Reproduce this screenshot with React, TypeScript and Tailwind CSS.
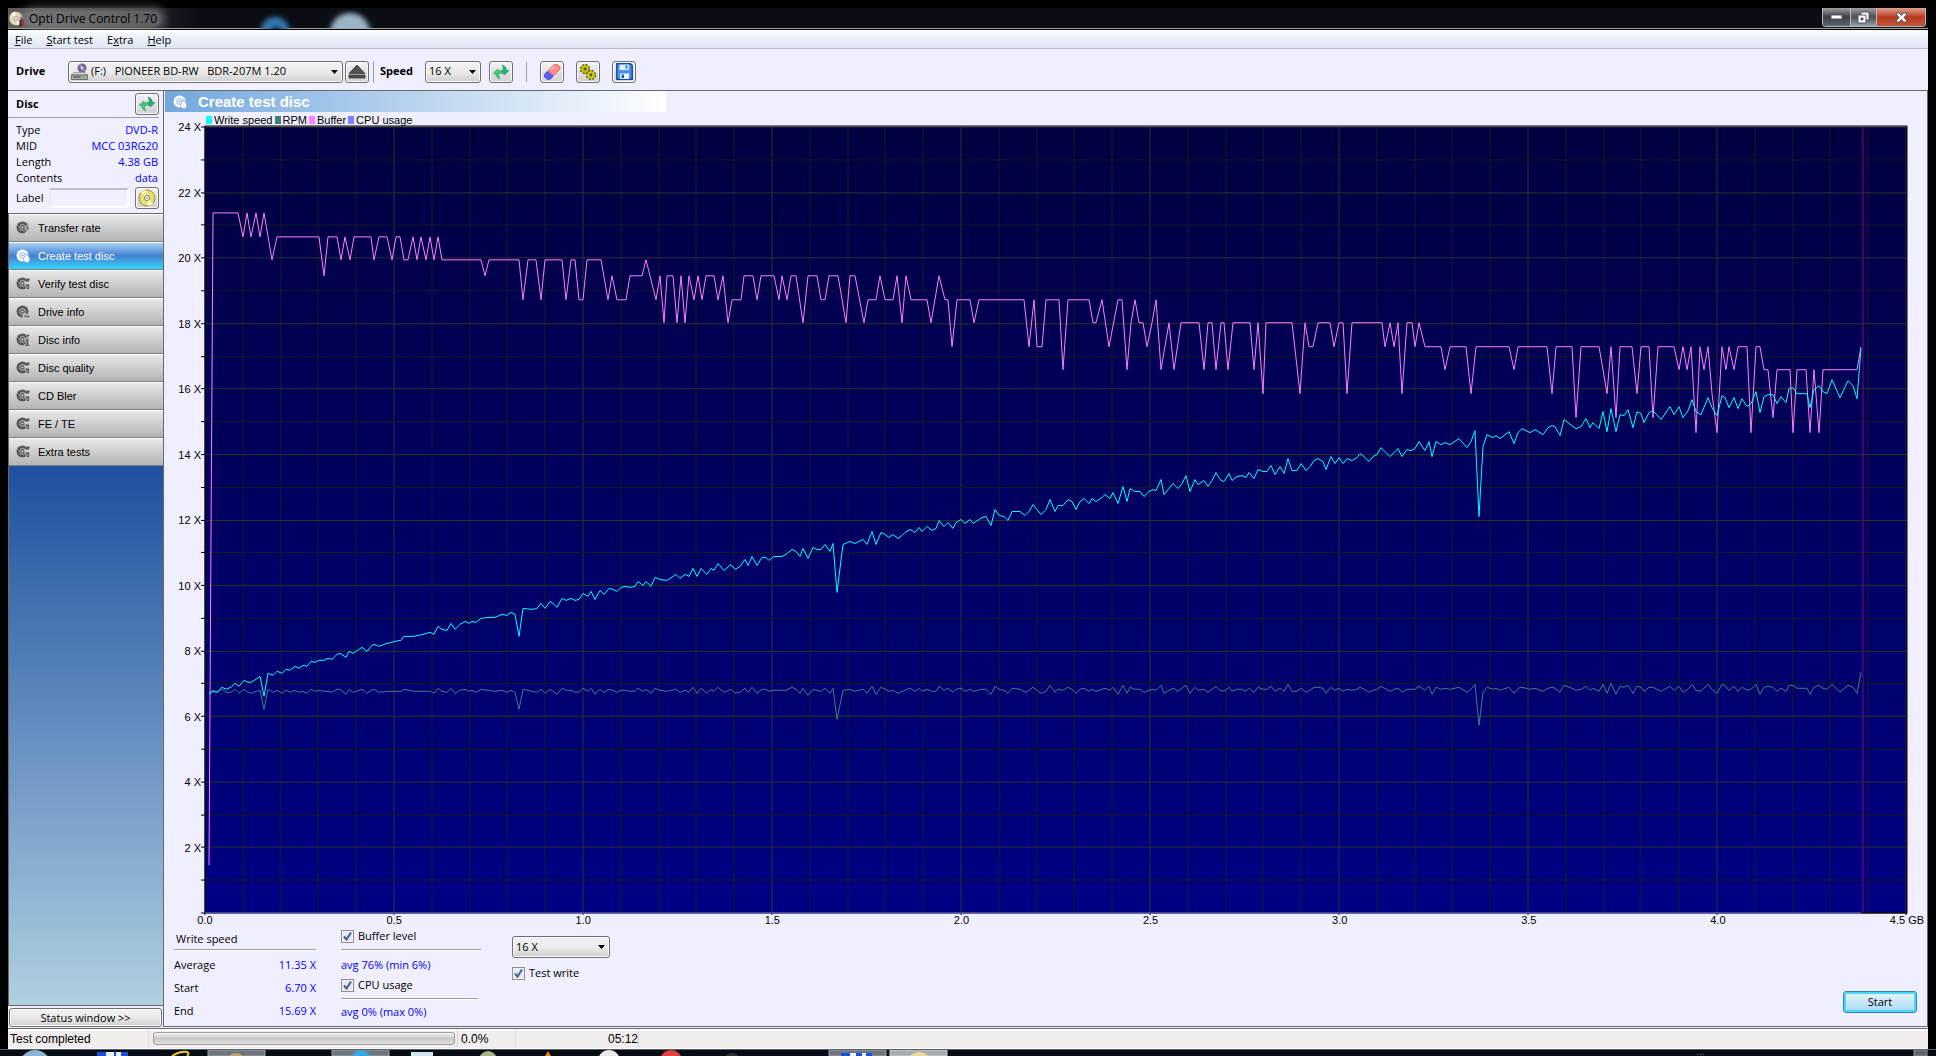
import { useState, type ReactNode } from "react";
import { clsx } from "clsx";

interface Point {
  x: number;
  y: number;
}

// plot area, in chart units
const LEFT = 205;
const TOP = 127;
const WIDTH = 1702;
const HEIGHT = 787;
const BOTTOM = TOP + HEIGHT;
const LAST_X = 1861;

const BUFFER_LEVELS: Record<string, number> = {
  a: 213, b: 237, c: 260, d: 276, e: 300, f: 323, g: 347, h: 370, i: 394, j: 418, k: 433, z: 866,
};

const BUFFER = `209z 213a 238a 243b 247a 251b 256a 260b 264a 272c 277b 319b 324d 328b 337b 341c 345b 350c 354b 371b
374c 379b 387b 392c 396b 400b 404c 408c 413b 417c 421b 426c 430b 434c 438b 442c 481c 485d 489c 519c 523e 528c 536c
541e 545c 562c 566e 571c 575c 579e 583e 587c 601c 608e 612d 617e 626e 630d 642d 646c 650d 656e 660d 664f 667d 673d
677f 681d 685f 689d 694e 698d 702e 706d 714d 718e 723d 728f 732e 741e 744d 753d 757e 761d 774d 779e 782d 787e 791d
796d 803f 808d 817d 821e 825e 829d 838d 846f 850d 855d 864f 868e 876e 880d 885e 893e 897d 902f 906d 911e 927e 931f
939d 945e 948e 952g 957e 970e 974f 979e 1024e 1029g 1034e 1037g 1042g 1046e 1059e 1063h 1068e 1089e 1093f 1096f
1102e 1109g 1118e 1122e 1127h 1131f 1135e 1139f 1143f 1147g 1152f 1156e 1161h 1169f 1174h 1181f 1199f 1204h 1208f
1212f 1216h 1221f 1224f 1228h 1233f 1250f 1254h 1258f 1263i 1266f 1292f 1300i 1305f 1309g 1313g 1318f 1330f 1334g
1339f 1343f 1347i 1352f 1382f 1385g 1390f 1394g 1398f 1402i 1407f 1412f 1415g 1419f 1425g 1441g 1445h 1450g 1466g
1471i 1476g 1509g 1514h 1518g 1547g 1552i 1556g 1572g 1576j 1581g 1599g 1603h 1607i 1611g 1616j 1620g 1632g 1637i
1641g 1649g 1653j 1658g 1674g 1679h 1683g 1687h 1691g 1696k 1700g 1704h 1708g 1712i 1717k 1722g 1726h 1729g 1734h
1738g 1747g 1751k 1756g 1760g 1764h 1768h 1773j 1777h 1790h 1793k 1797h 1806h 1810k 1814h 1819k 1823h 1857h 1861g`;

const SPEED = `209,695 213,692 217,693 222,688 226,690 231,688 235,684 239,687 244,681 248,683 251,683 256,680 260,677
264,697 268,674 273,676 277,672 282,674 286,670 290,671 295,667 299,669 303,666 307,667 311,662 315,663 319,661
324,661 328,659 332,660 337,655 340,654 346,658 349,652 353,654 362,648 367,652 371,647 374,645 379,647 387,644
392,643 395,642 401,641 404,637 414,637 423,635 430,633 434,635 438,627 442,630 447,631 451,624 455,630 460,625
465,622 469,624 472,622 476,623 481,619 488,618 495,618 502,615 507,616 511,613 515,615 519,637 523,609 532,610
537,609 541,604 545,609 550,602 553,604 557,608 562,599 566,601 571,599 575,601 579,600 583,594 588,597 591,592
595,600 600,591 604,595 609,589 613,590 617,592 621,588 626,587 630,588 635,587 638,582 643,586 646,582 651,587
655,578 660,580 667,581 676,575 680,579 685,575 689,577 693,569 697,577 701,569 707,575 711,569 714,571 718,564
724,571 731,565 735,570 740,567 745,560 748,566 752,557 757,566 762,558 766,558 769,561 774,557 782,557 786,555
792,550 796,552 800,557 803,549 808,559 813,548 817,550 821,550 825,545 830,552 833,544 837,593 843,545 850,542
855,544 863,540 867,545 872,532 876,545 881,533 885,535 889,538 893,535 898,539 902,536 905,533 910,530 915,533
919,528 922,532 927,527 932,531 936,529 939,521 944,527 948,523 953,529 956,523 961,520 965,524 970,520 973,524
982,518 986,517 991,526 995,510 999,516 1004,517 1008,521 1012,512 1020,512 1025,516 1029,512 1033,505 1041,515
1046,510 1050,500 1055,512 1058,506 1063,506 1068,500 1072,502 1076,510 1080,502 1084,499 1089,504 1092,499
1096,502 1102,498 1105,495 1110,499 1113,493 1118,504 1123,487 1127,502 1130,489 1135,492 1140,492 1144,497
1149,492 1153,490 1156,491 1161,480 1164,495 1169,489 1173,484 1178,489 1182,484 1186,476 1190,492 1195,480
1198,485 1204,481 1208,487 1212,481 1216,473 1220,480 1224,482 1229,474 1232,481 1237,477 1242,476 1246,478
1249,473 1254,479 1258,470 1263,472 1267,472 1271,466 1275,475 1280,467 1284,474 1288,459 1292,471 1297,471
1301,464 1306,471 1310,467 1314,461 1318,459 1323,462 1326,470 1331,457 1335,464 1339,458 1343,464 1347,459
1352,461 1357,458 1360,454 1364,457 1369,462 1373,457 1377,455 1381,448 1390,457 1394,453 1398,449 1402,457
1407,450 1411,451 1415,449 1419,442 1425,451 1429,442 1432,457 1436,442 1441,445 1445,443 1450,445 1459,439
1467,448 1471,442 1475,431 1479,517 1483,447 1487,435 1493,438 1496,436 1500,439 1509,432 1514,444 1518,433
1522,429 1530,433 1535,430 1543,435 1548,428 1552,426 1555,427 1560,436 1564,420 1572,426 1576,429 1581,427
1586,419 1590,428 1593,423 1599,429 1603,412 1607,432 1611,409 1616,432 1620,415 1624,416 1628,410 1633,428
1637,412 1641,414 1644,423 1649,413 1653,411 1661,420 1670,407 1674,415 1679,407 1683,418 1688,411 1692,400
1696,412 1701,415 1708,398 1712,408 1717,416 1722,396 1725,398 1729,408 1734,398 1738,409 1742,399 1747,407
1751,404 1756,392 1760,413 1764,397 1768,395 1773,395 1777,404 1781,397 1786,403 1789,389 1793,388 1797,394
1807,394 1810,408 1814,390 1819,386 1823,392 1827,394 1832,380 1840,398 1848,381 1853,386 1857,399 1861,349`;

const speedPoints: Point[] = SPEED.split(/\s+/).map((pair) => {
  const [x, y] = pair.split(",").map(Number);
  return { x, y };
});

const bufferPoints: Point[] = BUFFER.split(/\s+/).map((s) => ({
  x: parseInt(s, 10),
  y: BUFFER_LEVELS[s.slice(-1)],
}));

// linear speed divided by the track radius, radius² grows linearly with position
const rpmPoints: Point[] = speedPoints.map(({ x, y }) => {
  const nominal = Math.sqrt(48400 + 139 * (x - 209));
  const scale = 222 + (3 * (x - 209)) / 1650;
  return { x, y: Math.round(BOTTOM - ((BOTTOM - y) / nominal) * scale) };
});

const toPoints = (points: Point[]) => points.map((p) => `${p.x},${p.y}`).join(" ");

const Y_LABELS = [24, 22, 20, 18, 16, 14, 12, 10, 8, 6, 4, 2];
const X_LABELS = ["0.0", "0.5", "1.0", "1.5", "2.0", "2.5", "3.0", "3.5", "4.0", "4.5 GB"];

const LEGEND = [
  { name: "Write speed", color: "bg-[#00ffff]" },
  { name: "RPM", color: "bg-[#408080]" },
  { name: "Buffer", color: "bg-[#ff80ff]" },
  { name: "CPU usage", color: "bg-[#8080ff]" },
];

type Badge = "bolt" | "flame" | "check" | "drive" | "info";

const NAV: { name: string; badge: Badge }[] = [
  { name: "Transfer rate", badge: "bolt" },
  { name: "Create test disc", badge: "flame" },
  { name: "Verify test disc", badge: "check" },
  { name: "Drive info", badge: "drive" },
  { name: "Disc info", badge: "info" },
  { name: "Disc quality", badge: "check" },
  { name: "CD Bler", badge: "check" },
  { name: "FE / TE", badge: "check" },
  { name: "Extra tests", badge: "check" },
];

const DISC_INFO = [
  ["Type", "DVD-R"],
  ["MID", "MCC 03RG20"],
  ["Length", "4.38 GB"],
  ["Contents", "data"],
];

const MENU = [
  ["", "F", "ile"],
  ["", "S", "tart test"],
  ["E", "x", "tra"],
  ["", "H", "elp"],
];

function DiscIcon({ badge, active = false }: { badge: Badge; active?: boolean }) {
  const c = active ? "#ffffff" : "#585858";
  const bg = active ? "#6aa4e0" : "#d4d4d4";
  return (
    <svg width="15" height="14" viewBox="0 0 15 14" className="shrink-0">
      <circle cx="6.5" cy="6.5" r="6" fill={c} />
      <circle cx="6.5" cy="6.5" r="2.8" fill="none" stroke={bg} strokeWidth="0.8" />
      <circle cx="6.5" cy="6.5" r="1" fill={bg} />
      {badge === "bolt" && <path d="M13.5 1 9 7h2l-1.800 6L14 6h-2.200z" fill={c} stroke={bg} strokeWidth="0.8" />}
      {badge === "flame" && (
        <path d="M10.400 4.600c.3 2 3.400 3 3.400 5.800 0 2-1.400 3.200-3.200 3.200S7.500 12.300 7.500 10.500C7.500 8 10.300 7 10.400 4.600z" fill={c} stroke={bg} strokeWidth="0.7" />
      )}
      {badge === "check" && (
        <>
          <path d="M8.500 7V4.500L11 2h3v3.500L11.500 7z" fill={bg} />
          <path d="M9.500 3 11 1.500h2.500v2L12 4.800H9.500z" fill={c} />
          <path d="M9 8.500 11 7h2.500v5.500H11z" fill={c} stroke={bg} strokeWidth="0.7" />
          <path d="M10.500 10.500 12 9v1.500z" fill={bg} />
        </>
      )}
      {badge === "drive" && (
        <>
          <path d="M7 9h7.500v4.200H7z" fill="#a8a8a8" stroke={bg} strokeWidth="0.8" />
          <path d="M8.500 11.500h4.500" stroke="#686868" />
        </>
      )}
      {badge === "info" && (
        <>
          <path d="M9 5.500h3.800v6.300H14v1.700H8.500v-1.700H10V7H9z" fill={c} stroke={bg} strokeWidth="0.8" />
          <circle cx="11.800" cy="2.600" r="1.500" fill={c} stroke={bg} strokeWidth="0.6" />
        </>
      )}
    </svg>
  );
}

function RefreshIcon() {
  return (
    <svg width="18" height="16" viewBox="0 0 18 16">
      <path d="M5.500 5 1 9.500h2.500c.2 2.800 1.500 4.700 4.500 5.500-1-1.600-1.300-3.300-1-5.500h3z" fill="#3cc878" stroke="#28a060" strokeWidth="0.5" />
      <path d="M12.500 11 17 6.500h-2.500C14.300 3.700 13 1.800 10 1c1 1.600 1.300 3.300 1 5.500H8z" fill="#20b080" stroke="#108858" strokeWidth="0.5" />
    </svg>
  );
}

function EjectIcon() {
  return (
    <svg width="18" height="15" viewBox="0 0 18 15">
      <path d="M9 1 17 9.500H1z" fill="#505050" stroke="#303030" strokeWidth="0.7" />
      <path d="M1 11h16v3H1z" fill="#505050" stroke="#303030" strokeWidth="0.7" />
    </svg>
  );
}

function EraserIcon() {
  return (
    <svg width="18" height="18" viewBox="0 0 18 18">
      <path d="M7 5.500 11 2C13.500 .5 17.500 3 17 6L11 12.500 5 8z" fill="#ff8c8c" stroke="#e05050" strokeWidth="0.8" />
      <path d="M4 8.500 10 13 7.500 16C5 17.500 1 15 1.500 12z" fill="#6060ff" stroke="#3030d0" strokeWidth="0.8" />
      <path d="M8 6.500 11.500 3.500" stroke="#ffd0d0" strokeWidth="1.4" />
    </svg>
  );
}

function GearsIcon() {
  return (
    <svg width="18" height="18" viewBox="0 0 18 18">
      <circle cx="6" cy="6" r="4.200" fill="#b8b800" stroke="#606000" strokeWidth="2" strokeDasharray="2 1.300" />
      <circle cx="6" cy="6" r="3.800" fill="#c8c010" />
      <circle cx="6" cy="6" r="1.400" fill="#505000" />
      <circle cx="12" cy="12" r="4.200" fill="#b8b800" stroke="#606000" strokeWidth="2" strokeDasharray="2 1.300" />
      <circle cx="12" cy="12" r="3.800" fill="#d0c818" />
      <circle cx="12" cy="12" r="1.400" fill="#505000" />
    </svg>
  );
}

function SaveIcon() {
  return (
    <svg width="17" height="17" viewBox="0 0 17 17">
      <path d="M.8.8h13.700l1.700 1.700v13.700H.8z" fill="#4c90f0" stroke="#0848b0" strokeWidth="1.4" />
      <path d="M3.500 1.500h9.500v5.500H3.500z" fill="#e8f0ff" />
      <path d="M4 10.500h9v5.500H4z" fill="#f0f0f0" />
      <path d="M5.500 11.500h2.500v3.500H5.500z" fill="#1858c8" />
      <path d="M9.500 2.200h2v3.600h-2z" fill="#3c80e8" />
    </svg>
  );
}

function GoldDiscIcon() {
  return (
    <svg width="18" height="18" viewBox="0 0 18 18">
      <circle cx="9" cy="9" r="8" fill="#e4e070" stroke="#989040" />
      <path d="M9 9 3 3.500A8 8 0 0 1 8 1zM9 9l6 5.500A8 8 0 0 1 10 17z" fill="#fafac8" />
      <circle cx="9" cy="9" r="2.600" fill="#f4f4f4" stroke="#888850" />
      <circle cx="9" cy="9" r="0.8" fill="#666" />
    </svg>
  );
}

function DriveIcon() {
  return (
    <svg width="17" height="17" viewBox="0 0 17 17">
      <circle cx="11" cy="5" r="4.600" fill="#7868a0" />
      <circle cx="11" cy="5" r="1.400" fill="#e8e0f4" />
      <path d="M11 5 8.500 1.200M11 5l3 3.200" stroke="#c8b8e0" />
      <path d="M3 9.500h11l2.500 2.500H.5z" fill="#d8d8d8" stroke="#707070" strokeWidth="0.6" />
      <path d="M.5 12h16v4.500H.5z" fill="#a8a8a8" stroke="#505050" strokeWidth="0.7" />
      <path d="M2.500 14h7" stroke="#404040" />
      <path d="M12.500 14h2" stroke="#20e020" strokeWidth="1.5" />
    </svg>
  );
}

function AppIcon() {
  return (
    <svg width="16" height="16" viewBox="0 0 16 16" className="shrink-0">
      <circle cx="7" cy="7.500" r="6.800" fill="#e8dcc0" stroke="#a09878" strokeWidth="0.7" />
      <path d="M7 7.500 2 2.800A7 7 0 0 1 6 .8zM7 7.500l5 4.700A7 7 0 0 1 8 14.200z" fill="#fffdf0" />
      <circle cx="7" cy="7.500" r="2" fill="#fff" stroke="#8c8060" strokeWidth="0.8" />
      <path d="M11.500 5c2 2 3.500 4 3.300 7.500-.1 2-1.300 3-2.800 3V9z" fill="#7c1818" />
      <path d="M10.500 9v6l1.500.8V8.500z" fill="#301010" />
    </svg>
  );
}

function ToolButton({ label, children, className }: { label: string; children: ReactNode; className?: string }) {
  return (
    <button
      aria-label={label}
      className={clsx(
        "flex h-[22px] w-6 shrink-0 items-center justify-center rounded-[3px] border border-[#707070] bg-linear-to-b from-[#f4f4f4] to-[#d0d0d0] shadow-[inset_0_0_0_1px_#fcfcfc]",
        className
      )}
    >
      {children}
    </button>
  );
}

interface DropDownProps {
  label: string;
  value: string;
  className: string;
  selectClass?: string;
  icon?: ReactNode;
}

function DropDown({ label, value, className, selectClass = "pl-[3px]", icon }: DropDownProps) {
  return (
    <div className={clsx("relative", className)}>
      <select
        aria-label={label}
        defaultValue={value}
        className={clsx(
          "h-[22px] w-full appearance-none rounded-[3px] border border-[#707070] bg-linear-to-b from-[#f2f2f2] via-[#ebebeb] to-[#cfcfcf] shadow-[inset_0_0_0_1px_#fcfcfc]",
          selectClass
        )}
      >
        <option>{value}</option>
      </select>
      {icon && <span className="pointer-events-none absolute top-[2px] left-[3px]">{icon}</span>}
      <svg width="7" height="4" className="pointer-events-none absolute top-[9px] right-[5px]">
        <path d="M0 0h7L3.500 4z" fill="#000" />
      </svg>
    </div>
  );
}

function CheckBox({ label }: { label: string }) {
  const [on, setOn] = useState(true);
  return (
    <label className="flex h-[14px] items-center">
      <input
        type="checkbox"
        checked={on}
        onChange={(e) => setOn(e.target.checked)}
        className="peer size-[13px] appearance-none border border-[#8e8f8f] bg-[#e4e8f0] shadow-[inset_0_0_0_1px_#f4f4f4]"
      />
      <svg width="13" height="13" viewBox="0 0 13 13" className="pointer-events-none invisible mr-1 -ml-[13px] peer-checked:visible">
        <path d="M3 6.500 5.500 9.500 10 2.500" fill="none" stroke="#4a5f97" strokeWidth="2" />
      </svg>
      {label}
    </label>
  );
}

function TitleBar() {
  return (
    <header className="flex h-[22px] items-start justify-between border-b border-black bg-linear-to-r from-[#5c5c5c] via-[#0a0e14] via-10% to-[#0a0e14] to-90% shadow-[inset_0_-1px_0_#a0a4a0]">
      <div className="flex h-full items-center pl-px">
        <AppIcon />
        <h1 className="rounded-lg bg-[#8c8c8c]/60 px-1 text-[12px] leading-4 whitespace-nowrap text-black shadow-[0_0_8px_4px_rgba(140,140,140,0.6)]">
          Opti Drive Control 1.70
        </h1>
        <svg width="150" height="20" viewBox="0 0 150 20" className="ml-[86px]">
          <defs>
            <filter id="soft">
              <feGaussianBlur stdDeviation="2.5" />
            </filter>
          </defs>
          <g filter="url(#soft)">
            <circle cx="28" cy="22" r="14" fill="#3478b4" />
            <circle cx="29" cy="23" r="6" fill="#0a1420" />
            <circle cx="103" cy="24" r="20" fill="#9cb4c8" />
          </g>
        </svg>
      </div>
      <div className="mr-0.5 flex h-[19px] overflow-hidden rounded-b-[4px] border border-t-0 border-[#b8b8b8]">
        <button aria-label="Minimize" className="flex w-7 items-center justify-center border-r border-[#b8b8b8] bg-linear-to-b from-[#a0a0a0] via-[#3c4046] to-[#60686c]">
          <svg width="13" height="6">
            <path d="M1 1h11v4H1z" fill="#fff" stroke="#505468" />
          </svg>
        </button>
        <button aria-label="Restore" className="flex w-[26px] items-center justify-center border-r border-[#b8b8b8] bg-linear-to-b from-[#a0a0a0] via-[#4c5054] to-[#90a4b0]">
          <svg width="13" height="13">
            <path d="M4 1h8v8H4z" fill="#fff" stroke="#505468" />
            <path d="M1 4h8v8H1z" fill="#fff" stroke="#505468" />
            <path d="M4 7h2v2H4z" fill="#505468" stroke="#505468" />
          </svg>
        </button>
        <button aria-label="Close" className="flex w-12 items-center justify-center bg-linear-to-b from-[#e0a090] via-[#b83820] to-[#c05838]">
          <svg width="13" height="11" viewBox="0 0 13 11">
            <path d="M1.500 1h3l2 2.500 2-2.500h3v1.500L9 5.500l2.500 3V10h-3l-2-2.500-2 2.500h-3V8.500L4 5.500l-2.500-3z" fill="#fff" stroke="#505468" />
          </svg>
        </button>
      </div>
    </header>
  );
}

function Toolbar() {
  return (
    <div className="flex h-[42px] items-center border-b border-[#696969] bg-[#f0efff] pt-1">
      <span className="w-[60px] pl-2 font-bold">Drive</span>
      <DropDown
        label="Drive"
        value={"(F:)\u00a0\u00a0 PIONEER BD-RW\u00a0\u00a0 BDR-207M 1.20"}
        className="w-[275px]"
        selectClass="pl-[22px]"
        icon={<DriveIcon />}
      />
      <ToolButton label="Eject" className="ml-0.5">
        <EjectIcon />
      </ToolButton>
      <div className="ml-1 h-[22px] border-l border-[#a0a0a0]" />
      <span className="w-[51px] pl-1.5 font-bold">Speed</span>
      <DropDown label="Speed" value="16 X" className="w-14" />
      <ToolButton label="Refresh speeds" className="ml-2">
        <RefreshIcon />
      </ToolButton>
      <div className="mx-[13px] h-5 border-l border-[#a0a0a0]" />
      <div className="flex gap-3">
        <ToolButton label="Erase disc">
          <EraserIcon />
        </ToolButton>
        <ToolButton label="Options">
          <GearsIcon />
        </ToolButton>
        <ToolButton label="Save">
          <SaveIcon />
        </ToolButton>
      </div>
    </div>
  );
}

function Sidebar({ active, onSelect }: { active: string; onSelect: (name: string) => void }) {
  return (
    <aside className="flex w-[156px] shrink-0 flex-col border-r border-[#696969] bg-[#f0efff]">
      <div className="mr-1 flex h-[27px] items-center justify-between border-b border-[#a0a0a0] pl-2">
        <h2 className="font-bold">Disc</h2>
        <ToolButton label="Refresh disc">
          <RefreshIcon />
        </ToolButton>
      </div>
      <dl className="pt-1 pr-[5px] pl-2 leading-4">
        {DISC_INFO.map(([name, value]) => (
          <div key={name} className="flex justify-between">
            <dt>{name}</dt>
            <dd className="text-[#0000ff]">{value}</dd>
          </div>
        ))}
      </dl>
      <div className="flex items-center pt-px pr-1 pb-1 pl-2">
        <label htmlFor="disc-label" className="w-[33px]">Label</label>
        <input id="disc-label" className="mr-1.5 h-5 w-20 border-2 border-t-[#c0c0c4] border-r-white border-b-white border-l-[#e8e8f0]" />
        <ToolButton label="Show disc label">
          <GoldDiscIcon />
        </ToolButton>
      </div>
      <nav className="border-t border-l border-[#696969] font-['Liberation_Sans',sans-serif]">
        {NAV.map((item) => (
          <button
            key={item.name}
            onClick={() => onSelect(item.name)}
            className={clsx(
              "flex h-7 w-full items-center gap-[7px] border-t border-b border-t-white border-b-[#808080] pl-[7px] text-left",
              item.name === active
                ? "bg-linear-to-b from-[#a8d0f4] via-[#4080d0] via-50% to-[#30d8ff] text-white"
                : "bg-linear-to-b from-[#e8e8e8] to-[#b4b4b4]"
            )}
          >
            <DiscIcon badge={item.badge} active={item.name === active} />
            {item.name}
          </button>
        ))}
      </nav>
      <div className="flex-1 border-b border-l border-[#696969] bg-linear-to-b from-[#1f4f9f] to-[#b0d0e0]" />
      <button className="mx-px mt-0.5 h-[19px] rounded-[3px] border border-[#707070] bg-linear-to-b from-[#f2f2f2] via-[#ebebeb] to-[#cfcfcf] leading-4 shadow-[inset_0_0_0_1px_#fcfcfc]">
        Status window &gt;&gt;
      </button>
    </aside>
  );
}

function Plot() {
  const columns = Array.from({ length: 46 }, (_, i) => i);
  const rows = Array.from({ length: 25 }, (_, i) => i);
  const colX = (i: number) => Math.round(LEFT + i * 37.8);
  const rowY = (i: number) => Math.round(TOP + (i * HEIGHT) / 24);
  return (
    <svg
      viewBox={`${LEFT} ${TOP} ${WIDTH} ${HEIGHT}`}
      preserveAspectRatio="none"
      shapeRendering="crispEdges"
      fill="none"
      className="absolute inset-0 size-full overflow-visible"
    >
      <defs>
        <linearGradient id="plot" x1="0" y1="0" x2="0" y2="1">
          <stop offset="0" stopColor="#000040" />
          <stop offset="1" stopColor="#000084" />
        </linearGradient>
      </defs>
      <rect x={LEFT} y={TOP} width={WIDTH} height={HEIGHT} fill="url(#plot)" />
      {columns.map((i) => (
        <path key={i} d={`M${colX(i)} ${TOP}v${HEIGHT}`} stroke={i % 5 ? "#161a20" : "#2c302c"} />
      ))}
      {rows.map((i) => (
        <path key={i} d={`M${LEFT} ${rowY(i)}h${WIDTH}`} stroke={i % 2 ? "#161a20" : "#2c302c"} />
      ))}
      {rows.map((i) => (
        <path key={i} d={`M${LEFT - 4} ${rowY(i)}h4`} stroke="#000" />
      ))}
      {columns.filter((i) => i % 5 === 0).map((i) => (
        <path key={i} d={`M${colX(i)} ${BOTTOM}v2`} stroke="#000" />
      ))}
      <rect x={LEFT} y={TOP - 1} width={WIDTH} height={HEIGHT + 1} stroke="#000" />
      <path d={`M1863 ${TOP}v${HEIGHT}`} stroke="#800080" />
      <path d={`M${LEFT} ${BOTTOM}H${LAST_X}`} stroke="#8080ff" />
      <polyline points={toPoints(rpmPoints)} stroke="#408080" />
      <polyline points={toPoints(bufferPoints)} stroke="#ff80ff" />
      <polyline points={toPoints(speedPoints)} stroke="#00ffff" />
    </svg>
  );
}

function Chart() {
  return (
    <section className="flex flex-1 flex-col pr-5 pl-10 font-['Liberation_Sans',sans-serif]">
      <ul className="flex h-[14px] items-end gap-0.5 pl-px leading-3">
        {LEGEND.map((item) => (
          <li key={item.name} className="flex items-center gap-0.5">
            <span className={clsx("h-2 w-1.5", item.color)} />
            {item.name}
          </li>
        ))}
      </ul>
      <div className="relative mt-px flex-1">
        <Plot />
        <div className="absolute inset-y-0 right-full grid grid-rows-12 pr-1 text-right whitespace-nowrap">
          {Y_LABELS.map((n) => (
            <span key={n} className="-mt-1.5 leading-3">{n} X</span>
          ))}
        </div>
      </div>
      <div className="flex h-4 items-start justify-between leading-[14px]">
        {X_LABELS.map((label) => (
          <span key={label} className="flex w-0 justify-center whitespace-nowrap">{label}</span>
        ))}
      </div>
    </section>
  );
}

const rule = "border-b border-[#a0a0a0] shadow-[0_1px_0_#fff]";

function ResultPanel() {
  return (
    <section className="flex h-[97px] items-start pl-[9px]">
      <div className="mt-0.5 w-[142px]">
        <h3 className={clsx("h-[19px] pl-0.5 leading-4", rule)}>Write speed</h3>
        <dl className="space-y-[7px] pt-[7px] leading-4">
          {[["Average", "11.35 X"], ["Start", "6.70 X"], ["End", "15.69 X"]].map(([name, value]) => (
            <div key={name} className="flex justify-between">
              <dt>{name}</dt>
              <dd className="text-[#0000ff]">{value}</dd>
            </div>
          ))}
        </dl>
      </div>
      <div className="ml-[25px] w-[140px]">
        <div className={clsx("h-[21px]", rule)}>
          <CheckBox label="Buffer level" />
        </div>
        <p className="pt-[7px] leading-4 text-[#0000ff]">avg 76% (min 6%)</p>
        <div className={clsx("mt-[5px] mr-[3px] h-[21px]", rule)}>
          <CheckBox label="CPU usage" />
        </div>
        <p className="pt-[5px] leading-4 text-[#0000ff]">avg 0% (max 0%)</p>
      </div>
      <div className="mt-[7px] ml-[31px] space-y-2">
        <DropDown label="Write speed" value="16 X" className="w-[98px]" />
        <CheckBox label="Test write" />
      </div>
      <button className="mt-[62px] mr-[10px] ml-auto h-[22px] w-[74px] rounded-[3px] border border-[#3c7fb1] bg-linear-to-b from-[#eaf6fd] via-[#c8e8f8] to-[#a7d9f5] shadow-[inset_0_0_0_2px_#48d8fc]">
        Start
      </button>
    </section>
  );
}

function StatusBar() {
  return (
    <footer className="mt-px flex h-[21px] items-center border-t border-b border-t-[#696969] border-b-white bg-[#f1edec] font-['Liberation_Sans',sans-serif] text-[12px] shadow-[inset_0_2px_0_#fff]">
      <span className="w-[140px] pl-0.5">Test completed</span>
      <div className="h-full border-l border-[#d8d8d8]" />
      <progress
        value={0}
        max={100}
        aria-label="Test progress"
        className="ml-1 h-[13px] w-[302px] appearance-none rounded-[3px] border border-[#a0a0a0] bg-linear-to-b from-[#f4f4f4] via-[#c8c8c8] to-[#e0e0e0] [&::-webkit-progress-bar]:bg-transparent"
      />
      <div className="ml-0.5 h-full border-l border-[#d8d8d8]" />
      <span className="w-[57px] pl-[3px]">0.0%</span>
      <div className="h-full border-l border-[#d8d8d8]" />
      <span className="w-[122px] text-right">05:12</span>
      <div className="h-full border-l border-[#d8d8d8]" />
    </footer>
  );
}

function Taskbar() {
  return (
    <div className="h-[7px] overflow-hidden border-t border-[#506070] bg-[#060c14]">
      <svg width="1936" height="6" viewBox="0 0 1936 6">
        <circle cx="35" cy="16" r="16" fill="#8cb4d0" />
        <path d="M97 2h31v4H97z" fill="#1850d8" />
        <path d="M106 2h8v4h-8zM116 2h5v4h-5z" fill="#e8eef8" />
        <path d="M172 6q8-5 15-4 3 1 0 4" fill="none" stroke="#f0c820" strokeWidth="2" />
        <path d="M208 0h57v6h-57zM332 0h57v6h-57z" fill="#70747c" stroke="#a0a4a8" />
        <circle cx="236" cy="11" r="8" fill="#c0a870" />
        <circle cx="361" cy="10" r="10" fill="#38a8e0" />
        <path d="M411 2h22v4h-22z" fill="#d0e4f0" />
        <circle cx="488" cy="10" r="9" fill="#a8b480" />
        <path d="m545 6 3-5 3 5z" fill="#f08020" />
        <circle cx="609" cy="11" r="11" fill="#e8e8e8" />
        <circle cx="671" cy="11" r="11" fill="#e04040" />
        <circle cx="732" cy="12" r="9" fill="#303030" />
        <path d="M829 0h57v6h-57z" fill="#70747c" stroke="#a0a4a8" />
        <path d="M841 3h31v3h-31z" fill="#1850d8" />
        <path d="M850 3h6v3h-6zM862 3h4v3h-4z" fill="#f0f4ff" />
        <path d="M890 0h57v6h-57z" fill="#a8acb0" stroke="#d0d0d0" />
        <circle cx="919" cy="14" r="12" fill="#e8dca0" />
        <path d="M1697 4h1v1h-1zM1700 4h1v1h-1zM1703 4h1v1h-1z" fill="#707880" />
        <path d="M1914 0h13v6h-13z" fill="#606468" stroke="#909498" />
      </svg>
    </div>
  );
}

export default function App() {
  const [active, setActive] = useState("Create test disc");

  return (
    <div className="flex min-h-screen flex-col bg-black pt-2 font-['Open_Sans','Noto_Sans',sans-serif] text-[11px] text-black">
      <div className="mx-2 flex flex-1 flex-col bg-[#f0efff]">
        <TitleBar />
        <nav className="flex h-[19px] items-center gap-[14px] border-b border-[#b4bccc] bg-linear-to-b from-white via-[#eef2fa] via-35% to-[#e0e6f5] pt-0.5 pl-[7px]">
          {MENU.map(([before, key, after]) => (
            <button key={key}>
              {before}
              <u>{key}</u>
              {after}
            </button>
          ))}
        </nav>
        <Toolbar />
        <div className="flex flex-1">
          <Sidebar active={active} onSelect={setActive} />
          <main className="flex min-w-0 flex-1 flex-col border-r border-b border-[#696969] pl-px">
            <div className="flex h-[21px] w-[501px] items-center gap-[10px] bg-linear-to-r from-[#72a8dc] to-white pl-2">
              <DiscIcon badge="flame" active />
              <h2 className="font-['Liberation_Sans',sans-serif] text-[15px] leading-5 font-bold text-white">{active}</h2>
            </div>
            <Chart />
            <ResultPanel />
          </main>
        </div>
        <StatusBar />
      </div>
      <Taskbar />
    </div>
  );
}
